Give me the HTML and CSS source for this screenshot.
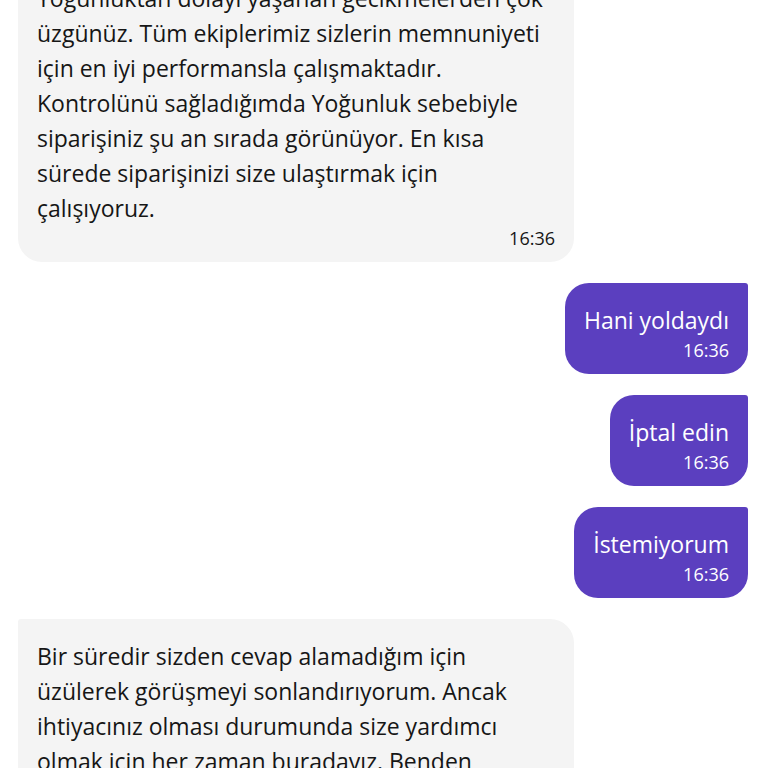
FILE: index.html
```html
<!DOCTYPE html>
<html lang="tr">
<head>
<meta charset="utf-8">
<link rel="stylesheet" href="styles.css">
</head>
<body>
<main class="chat">
  <div class="msg msg-in">
    <p class="msg-text">Yoğunluktan dolayı yaşanan gecikmelerden çok üzgünüz. Tüm ekiplerimiz sizlerin memnuniyeti için en iyi performansla çalışmaktadır. Kontrolünü sağladığımda Yoğunluk sebebiyle siparişiniz şu an sırada görünüyor. En kısa sürede siparişinizi size ulaştırmak için çalışıyoruz.</p>
    <span class="msg-time">16:36</span>
  </div>
  <div class="msg msg-out">
    <p class="msg-text">Hani yoldaydı</p>
    <span class="msg-time">16:36</span>
  </div>
  <div class="msg msg-out">
    <p class="msg-text">İptal edin</p>
    <span class="msg-time">16:36</span>
  </div>
  <div class="msg msg-out">
    <p class="msg-text">İstemiyorum</p>
    <span class="msg-time">16:36</span>
  </div>
  <div class="msg msg-in">
    <p class="msg-text">Bir süredir sizden cevap alamadığım için üzülerek görüşmeyi sonlandırıyorum. Ancak ihtiyacınız olması durumunda size yardımcı olmak için her zaman buradayız. Benden yardımcı olabileceğim başka bir konu var mı?</p>
    <span class="msg-time">16:36</span>
  </div>
</main>
</body>
</html>
```

FILE: styles.css
```css
html, body {
  margin: 0;
  padding: 0;
  background: #ffffff;
  height: 100%;
  overflow: hidden;
}

body {
  font-family: "Open Sans", "Noto Sans", sans-serif;
  color: #161616;
}

.chat {
  display: flex;
  flex-direction: column;
  gap: 21px;
  padding: 0 20px 0 18px;
  margin-top: -39px;
}

.msg {
  display: flex;
  flex-direction: column;
  box-sizing: border-box;
  padding: 20px 19px 12px 19px;
  border-radius: 24px;
  max-width: 556px;
}

.msg-text {
  margin: 0;
  font-size: 23px;
  font-weight: 500;
  line-height: 35px;
}

.msg-time {
  align-self: flex-end;
  font-size: 18px;
  font-weight: 500;
  line-height: 24px;
}

.msg-in {
  align-self: flex-start;
  width: 556px;
  background: #f4f4f4;
  border-top-left-radius: 3px;
}

.msg-out {
  align-self: flex-end;
  background: #5b3fbf;
  color: #ffffff;
  border-top-right-radius: 3px;
}
```
